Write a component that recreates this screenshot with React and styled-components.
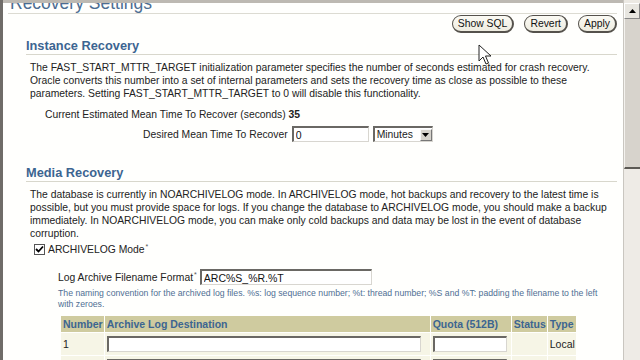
import React from 'react';
import styled, { createGlobalStyle } from 'styled-components';

const GlobalStyle = createGlobalStyle`
  html, body {
    margin: 0;
    padding: 0;
    background: #fffffd;
  }
  body {
    font-family: "Liberation Sans", Arial, sans-serif;
    color: #222;
  }
`;

function Cursor() {
  return (
    <CursorWrap>
      <svg width="14" height="22" viewBox="0 0 14 22">
        <path
          d="M1 1 L1 17 L5 13 L8 20 L10.5 19 L7.5 12 L13 12 Z"
          fill="#fff"
          stroke="#222"
          strokeWidth="1"
        />
      </svg>
    </CursorWrap>
  );
}

function App() {
  return (
    <>
      <GlobalStyle />
      <Frame>
        <LeftEdge />
        <Main>
          <TopEdge />
          <Page>
            <PageTitle>Recovery Settings</PageTitle>
            <ButtonBar>
              <PillButton>Show SQL</PillButton>
              <PillButton>Revert</PillButton>
              <PillButton>Apply</PillButton>
            </ButtonBar>

            <Section>
              <SectionTitle>Instance Recovery</SectionTitle>
              <Para>
                The FAST_START_MTTR_TARGET initialization parameter specifies the number of seconds estimated for crash recovery.<br />
                Oracle converts this number into a set of internal parameters and sets the recovery time as close as possible to these<br />
                parameters. Setting FAST_START_MTTR_TARGET to 0 will disable this functionality.
              </Para>
              <InfoRow>
                Current Estimated Mean Time To Recover (seconds) <b>35</b>
              </InfoRow>
              <FieldRow>
                <span>Desired Mean Time To Recover</span>
                <TextBox width={77} defaultValue="0" />
                <Select>
                  <span>Minutes</span>
                  <SelectArrow>
                    <svg width="7" height="4" viewBox="0 0 7 4">
                      <path d="M0 0 H7 L3.5 4 Z" fill="#000" />
                    </svg>
                  </SelectArrow>
                </Select>
              </FieldRow>
            </Section>

            <Section>
              <SectionTitle>Media Recovery</SectionTitle>
              <Para>
                The database is currently in NOARCHIVELOG mode. In ARCHIVELOG mode, hot backups and recovery to the latest time is<br />
                possible, but you must provide space for logs. If you change the database to ARCHIVELOG mode, you should make a backup<br />
                immediately. In NOARCHIVELOG mode, you can make only cold backups and data may be lost in the event of database<br />
                corruption.
              </Para>
              <CheckRow>
                <CheckBox>
                  <svg width="9" height="9" viewBox="0 0 9 9">
                    <path d="M1 4 L3.5 6.5 L8 1.5" fill="none" stroke="#000" strokeWidth="1.8" />
                  </svg>
                </CheckBox>
                <span>
                  ARCHIVELOG Mode<Req>*</Req>
                </span>
              </CheckRow>
              <Indented>
                <FormatRow>
                  <span>
                    Log Archive Filename Format<Req>*</Req>
                  </span>
                  <TextBox width={172} defaultValue="ARC%S_%R.%T" />
                </FormatRow>
                <Tip>
                  The naming convention for the archived log files. %s: log sequence number; %t: thread number; %S and %T: padding the filename to the left<br />
                  with zeroes.
                </Tip>
                <Table>
                  <thead>
                    <tr>
                      <Th>Number</Th>
                      <Th style={{ width: 322 }}>Archive Log Destination</Th>
                      <Th style={{ width: 77 }}>Quota (512B)</Th>
                      <Th>Status</Th>
                      <Th>Type</Th>
                    </tr>
                  </thead>
                  <tbody>
                    <tr>
                      <Td>1</Td>
                      <Td><TextBox width={314} /></Td>
                      <Td><TextBox width={74} /></Td>
                      <Td />
                      <Td>Local</Td>
                    </tr>
                    <tr>
                      <Td>2</Td>
                      <Td><TextBox width={314} /></Td>
                      <Td><TextBox width={74} /></Td>
                      <Td />
                      <Td>Local</Td>
                    </tr>
                  </tbody>
                </Table>
              </Indented>
            </Section>
          </Page>
          <Cursor />
        </Main>
        <ScrollBar>
          <ScrollUp>
            <svg width="7" height="4" viewBox="0 0 7 4">
              <path d="M0 4 H7 L3.5 0 Z" fill="#000" />
            </svg>
          </ScrollUp>
          <ScrollThumb />
          <ScrollTrack />
        </ScrollBar>
      </Frame>
    </>
  );
}

const Frame = styled.div`
  width: 640px;
  height: 360px;
  display: flex;
  overflow: hidden;
  background: #fffffd;
`;

const LeftEdge = styled.div`
  width: 3px;
  background: #6f6c68;
  flex: none;
`;

const TopEdge = styled.div`
  position: absolute;
  top: 0;
  left: 0;
  right: 0;
  height: 3px;
  background: #bdb9b2;
  z-index: 2;
`;

const Main = styled.div`
  flex: 1;
  position: relative;
  overflow: hidden;
  font-size: 10.35px;
`;

const Page = styled.div`
  padding: 0 6px 0 5px;
`;

const PageTitle = styled.h1`
  margin: -7px 0 0 0;
  padding-left: 2px;
  font-size: 17.5px;
  line-height: 20px;
  font-weight: normal;
  color: #4b6c92;
  border-bottom: 1px solid #dcdbd2;
`;

const ButtonBar = styled.div`
  display: flex;
  justify-content: flex-end;
  gap: 10px;
  margin-top: 1px;
`;

const PillButton = styled.button`
  font-family: "Liberation Sans", Arial, sans-serif;
  font-size: 10.4px;
  color: #111;
  height: 18px;
  padding: 0 5px;
  border-radius: 9px;
  border: 1px solid #55524c;
  border-right-width: 2px;
  border-bottom-width: 2px;
  background: linear-gradient(#fbfaf4, #eeece0);
  cursor: default;
`;

const Section = styled.section`
  padding-left: 18px;
`;

const SectionTitle = styled.h2`
  margin: 4px 0 0 0;
  font-size: 12.8px;
  line-height: 17px;
  font-weight: bold;
  color: #3c6591;
  border-bottom: 1px solid #d8d7cc;
`;

const Para = styled.p`
  margin: 6px 0 0 4px;
  line-height: 13px;
  color: #222;
  white-space: nowrap;
`;

const InfoRow = styled.div`
  margin: 8px 0 0 19px;
  line-height: 13px;
`;

const FieldRow = styled.div`
  display: flex;
  align-items: center;
  gap: 4px;
  margin: 5px 0 22px 117px;
`;

const TextBox = styled.input.attrs({ type: 'text' })`
  box-sizing: border-box;
  width: ${(p) => p.width}px;
  height: 16px;
  padding: 0 2px;
  font-family: "Liberation Sans", Arial, sans-serif;
  font-size: 10.5px;
  color: #111;
  background: #fff;
  border: 1px solid #d8d6d0;
  border-top: 2px solid #6a6864;
  border-left: 2px solid #6a6864;
  outline: none;
`;

const Select = styled.div`
  box-sizing: border-box;
  width: 60px;
  height: 16px;
  display: flex;
  align-items: center;
  justify-content: space-between;
  padding-left: 2px;
  border: 1px solid #d8d6d0;
  border-top: 2px solid #6a6864;
  border-left: 2px solid #6a6864;
  background: #fff;
`;

const SelectArrow = styled.span`
  width: 12px;
  height: 12px;
  display: flex;
  align-items: center;
  justify-content: center;
  background: #d6d3cc;
  border: 1px solid #f8f8f8;
  border-right-color: #777;
  border-bottom-color: #777;
  box-sizing: border-box;
`;

const CheckRow = styled.div`
  display: flex;
  align-items: center;
  gap: 3px;
  margin: 3px 0 0 8px;
`;

const CheckBox = styled.span`
  width: 9px;
  height: 9px;
  border: 1px solid #555;
  display: flex;
  align-items: center;
  justify-content: center;
  background: #fff;
`;

const Req = styled.sup`
  font-size: 7px;
  color: #555;
  margin-left: 1px;
`;

const Indented = styled.div`
  padding-left: 32px;
`;

const FormatRow = styled.div`
  display: flex;
  align-items: center;
  gap: 3px;
  margin-top: 14px;
`;

const Tip = styled.div`
  margin-top: 3px;
  font-size: 8.7px;
  line-height: 11px;
  color: #4f6f94;
  white-space: nowrap;
`;

const Table = styled.table`
  margin: 6px 0 0 3px;
  border-collapse: collapse;
  font-size: 10.5px;
`;

const Th = styled.th`
  background: #cfcb9f;
  color: #3c6591;
  font-weight: bold;
  text-align: left;
  height: 16px;
  padding: 0 1px 0 2px;
  border-right: 1px solid #fffffd;
  white-space: nowrap;
`;

const Td = styled.td`
  background: #f6f5e6;
  height: 22px;
  padding: 0 1px 0 2px;
  border-right: 1px solid #fffffd;
  border-top: 1px solid #fffffd;
  white-space: nowrap;
`;

const CursorWrap = styled.div`
  position: absolute;
  left: 475px;
  top: 44px;
  z-index: 5;
`;

const ScrollBar = styled.div`
  width: 16px;
  flex: none;
  display: flex;
  flex-direction: column;
  border-left: 1px solid #c9c6c0;
  background: #ece9e3;
`;

const ScrollUp = styled.div`
  height: 14px;
  margin-top: 3px;
  display: flex;
  align-items: center;
  justify-content: center;
  background: #e8e6e0;
  border: 1px solid #fff;
  border-right-color: #888;
  border-bottom-color: #888;
`;

const ScrollThumb = styled.div`
  height: 148px;
  background: #d7d3cc;
  border-bottom: 2px solid #5c5954;
  border-left: 1px solid #f4f2ee;
`;

const ScrollTrack = styled.div`
  flex: 1;
  background: #eeebe6;
`;

export default App;
